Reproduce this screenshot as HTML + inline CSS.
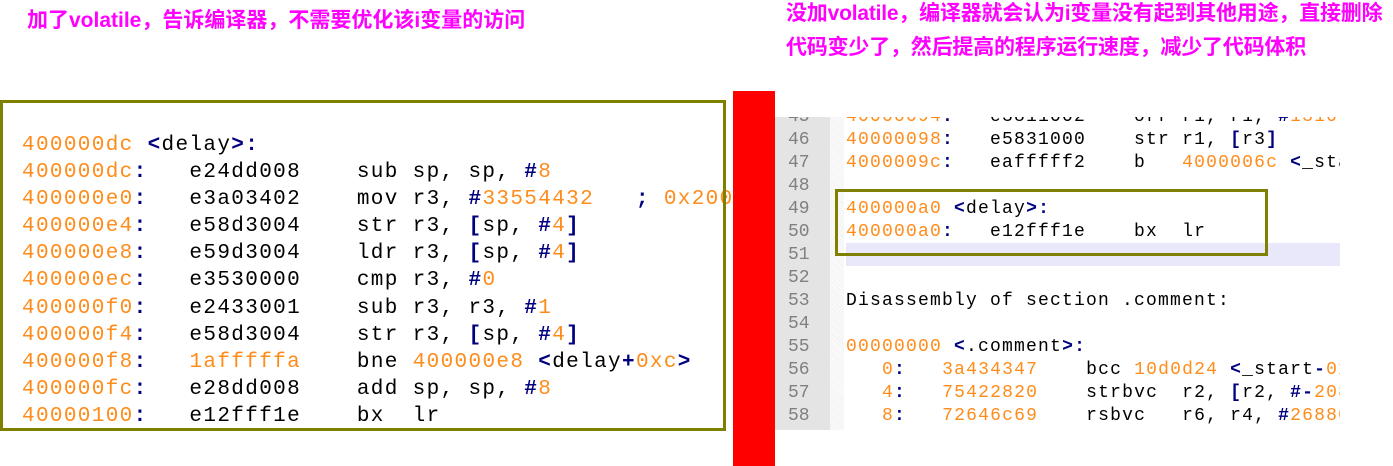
<!DOCTYPE html>
<html><head><meta charset="utf-8"><style>
html,body{margin:0;padding:0;background:#fff;width:1393px;height:466px;overflow:hidden;position:relative}
.h{position:absolute;color:#ff00ff;font:bold 21px "Liberation Sans","Noto Sans CJK SC",sans-serif;white-space:nowrap;line-height:24px}
pre{margin:0;font-family:"Liberation Mono",monospace;color:#000}
.o{color:#ff8c1a}.b{color:#000080;font-weight:bold}
#L{position:absolute;left:0;top:100px;width:733px;height:331px;overflow:hidden}
#Lbox{position:absolute;left:0;top:100px;width:720px;height:325px;border:3px solid #808000}
#L pre{position:absolute;left:22px;top:32px;font-size:21px;letter-spacing:1.35px;line-height:27.1px}
#red{position:absolute;left:733px;top:91px;width:42px;height:375px;background:#ff0000}
#gut{position:absolute;left:775px;top:117px;width:55px;height:313px;background:#e4e4e4}
#dot{position:absolute;left:830px;top:117px;width:14px;height:313px;background:repeating-linear-gradient(45deg,#f0f0f0 0 1px,#fff 1px 2px)}
#hl{position:absolute;left:846px;top:243px;width:494px;height:23px;background:#e8e8fa}
#R{position:absolute;left:775px;top:117px;width:565px;height:313px;overflow:hidden}
#R pre{position:absolute;top:-11.5px;font-size:18px;letter-spacing:1.2px;line-height:23px}
#num{left:13px;color:#808080;letter-spacing:0px!important}
#code{left:71px}
#Rbox{position:absolute;left:835px;top:189px;width:427px;height:61px;border:3px solid #808000}
</style></head><body>
<div class="h" style="left:27px;top:9px">加了volatile，告诉编译器，不需要优化该i变量的访问</div>
<div class="h" style="left:786px;top:2px;letter-spacing:-0.2px">没加volatile，编译器就会认为i变量没有起到其他用途，直接删除</div>
<div class="h" style="left:786px;top:36px;letter-spacing:-0.2px">代码变少了，然后提高的程序运行速度，减少了代码体积</div>

<div id="L"><pre><span class="o">400000dc</span> <span class="b">&lt;</span>delay<span class="b">&gt;:</span>
<span class="o">400000dc</span><span class="b">:</span>   e24dd008    sub sp, sp, <span class="b">#</span><span class="o">8</span>
<span class="o">400000e0</span><span class="b">:</span>   e3a03402    mov r3, <span class="b">#</span><span class="o">33554432</span>   <span class="b">;</span> <span class="o">0x2000000</span>
<span class="o">400000e4</span><span class="b">:</span>   e58d3004    str r3, <span class="b">[</span>sp, <span class="b">#</span><span class="o">4</span><span class="b">]</span>
<span class="o">400000e8</span><span class="b">:</span>   e59d3004    ldr r3, <span class="b">[</span>sp, <span class="b">#</span><span class="o">4</span><span class="b">]</span>
<span class="o">400000ec</span><span class="b">:</span>   e3530000    cmp r3, <span class="b">#</span><span class="o">0</span>
<span class="o">400000f0</span><span class="b">:</span>   e2433001    sub r3, r3, <span class="b">#</span><span class="o">1</span>
<span class="o">400000f4</span><span class="b">:</span>   e58d3004    str r3, <span class="b">[</span>sp, <span class="b">#</span><span class="o">4</span><span class="b">]</span>
<span class="o">400000f8</span><span class="b">:</span>   <span class="o">1afffffa</span>    bne <span class="o">400000e8</span> <span class="b">&lt;</span>delay<span class="b">+</span><span class="o">0xc</span><span class="b">&gt;</span>
<span class="o">400000fc</span><span class="b">:</span>   e28dd008    add sp, sp, <span class="b">#</span><span class="o">8</span>
<span class="o">40000100</span><span class="b">:</span>   e12fff1e    bx  lr</pre></div>
<div id="Lbox"></div>
<div id="red"></div>
<div id="gut"></div><div id="dot"></div><div id="hl"></div>
<div id="R"><pre id="num">45
46
47
48
49
50
51
52
53
54
55
56
57
58</pre><pre id="code"><span class="o">40000094</span><span class="b">:</span>   e3811002    orr r1, r1, <span class="b">#</span><span class="o">1310</span>
<span class="o">40000098</span><span class="b">:</span>   e5831000    str r1, <span class="b">[</span>r3<span class="b">]</span>
<span class="o">4000009c</span><span class="b">:</span>   eafffff2    b   <span class="o">4000006c</span> <span class="b">&lt;</span>_start<span class="b">+</span><span class="o">0x6c</span><span class="b">&gt;</span>

<span class="o">400000a0</span> <span class="b">&lt;</span>delay<span class="b">&gt;:</span>
<span class="o">400000a0</span><span class="b">:</span>   e12fff1e    bx  lr


Disassembly of section .comment:

<span class="o">00000000</span> <span class="b">&lt;</span>.comment<span class="b">&gt;:</span>
   <span class="o">0</span><span class="b">:</span>   <span class="o">3a434347</span>    bcc <span class="o">10d0d24</span> <span class="b">&lt;</span>_start<span class="b">-</span><span class="o">0x3ef2f2dc</span><span class="b">&gt;</span>
   <span class="o">4</span><span class="b">:</span>   <span class="o">75422820</span>    strbvc  r2, <span class="b">[</span>r2, <span class="b">#-</span><span class="o">2080</span><span class="b">]</span>
   <span class="o">8</span><span class="b">:</span>   <span class="o">72646c69</span>    rsbvc   r6, r4, <span class="b">#</span><span class="o">26880</span></pre></div>
<div id="Rbox"></div>
</body></html>
